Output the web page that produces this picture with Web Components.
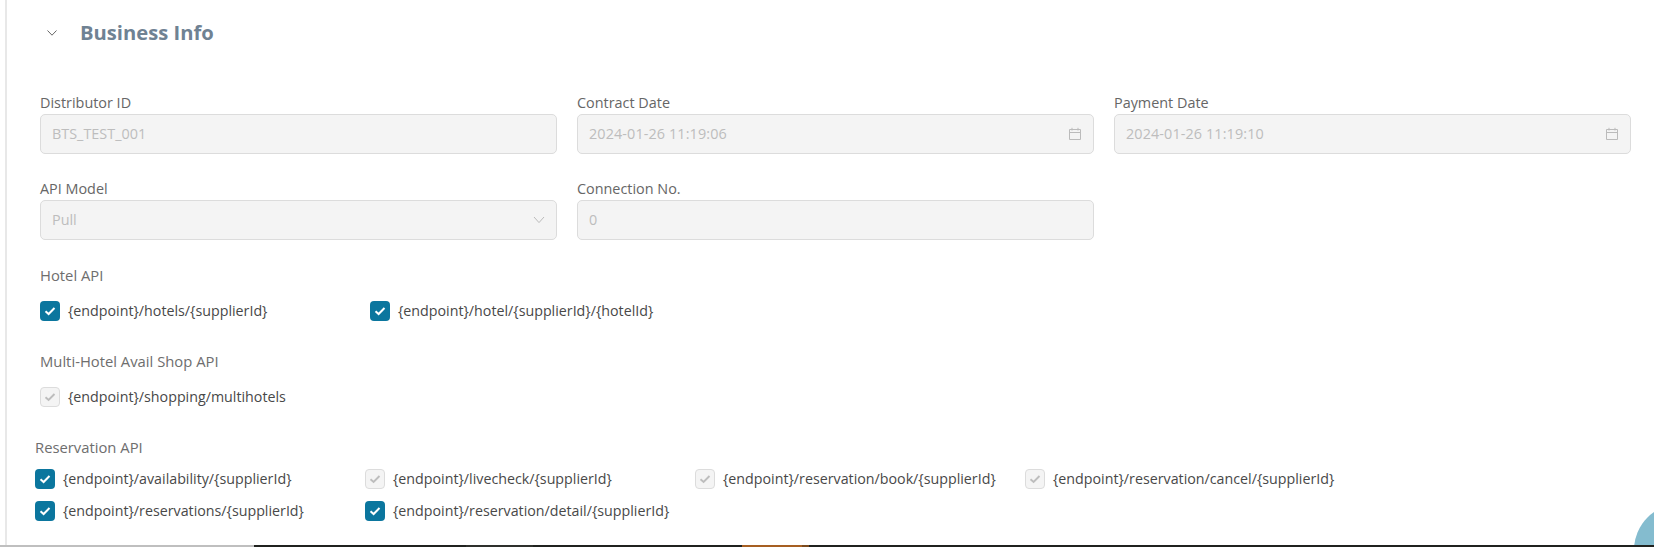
<!DOCTYPE html>
<html>
<head>
<meta charset="utf-8">
<title>Business Info</title>
<style>
	html, body {
		margin: 0;
		height: 547px;
		overflow: hidden;
		background: #FFFFFF;
		font-family: "Open Sans", "Liberation Sans", sans-serif;
	}
</style>
</head>
<body>
<biz-panel>
	<biz-section-title>Business Info</biz-section-title>
	<biz-form-grid>
		<biz-field label="Distributor ID" value="BTS_TEST_001"></biz-field>
		<biz-field label="Contract Date" value="2024-01-26 11:19:06" icon="calendar"></biz-field>
		<biz-field label="Payment Date" value="2024-01-26 11:19:10" icon="calendar"></biz-field>
		<biz-field label="API Model" value="Pull" icon="chevron"></biz-field>
		<biz-field label="Connection No." value="0"></biz-field>
	</biz-form-grid>
	<biz-api-group label="Hotel API" gap="first" >
		<biz-check checked>{endpoint}/hotels/{supplierId}</biz-check>
		<biz-check checked>{endpoint}/hotel/{supplierId}/{hotelId}</biz-check>
	</biz-api-group>
	<biz-api-group label="Multi-Hotel Avail Shop API">
		<biz-check disabled>{endpoint}/shopping/multihotels</biz-check>
	</biz-api-group>
	<biz-api-group label="Reservation API" type="outdent">
		<biz-check checked>{endpoint}/availability/{supplierId}</biz-check>
		<biz-check disabled>{endpoint}/livecheck/{supplierId}</biz-check>
		<biz-check disabled>{endpoint}/reservation/book/{supplierId}</biz-check>
		<biz-check disabled>{endpoint}/reservation/cancel/{supplierId}</biz-check>
		<biz-check checked>{endpoint}/reservations/{supplierId}</biz-check>
		<biz-check checked>{endpoint}/reservation/detail/{supplierId}</biz-check>
	</biz-api-group>
</biz-panel>
<biz-float-button></biz-float-button>
<biz-bottom-strip></biz-bottom-strip>

<script>
class Panel extends HTMLElement {
	constructor() {
		super();
		let shadowRoot = this.attachShadow({mode: 'open'});
		shadowRoot.innerHTML = `
		<style>
		:host {
			display: block;
			box-sizing: border-box;
			height: 545px;
			margin-left: 5px;
			border-left: 2px solid #E8E8E8;
			overflow: hidden;
		}
		</style>
		<slot></slot>`;
	}
}
window.customElements.define('biz-panel', Panel);

class SectionTitle extends HTMLElement {
	constructor() {
		super();
		let shadowRoot = this.attachShadow({mode: 'open'});
		shadowRoot.innerHTML = `
		<style>
		:host {
			display: flex;
			align-items: center;
			height: 64px;
			margin-bottom: 28px;
			padding-left: 40px;
			font-size: 20.2px;
			font-weight: 700;
			color: #6F8293;
		}
		svg {
			width: 10px;
			height: 6px;
			margin-top: 2px;
			margin-right: 23px;
			fill: none;
			stroke: #555555;
			stroke-width: 0.9;
		}
		</style>
		<svg viewBox="0 0 10 6"><path d="M0.5 0.5 L5 5.2 L9.5 0.5"/></svg>
		<slot></slot>`;
	}
}
window.customElements.define('biz-section-title', SectionTitle);

class FormGrid extends HTMLElement {
	constructor() {
		super();
		let shadowRoot = this.attachShadow({mode: 'open'});
		shadowRoot.innerHTML = `
		<style>
		:host {
			display: grid;
			grid-template-columns: repeat(3, 517px);
			column-gap: 20px;
			row-gap: 24px;
			padding-left: 33px;
		}
		</style>
		<slot></slot>`;
	}
}
window.customElements.define('biz-form-grid', FormGrid);

class Field extends HTMLElement {
	constructor() {
		super();
		let icons = {
			calendar: `<svg width="14" height="14" viewBox="0 0 14 14"><path d="M1.5 2.5 H12.5 V12.5 H1.5 Z M1.5 5.5 H12.5 M4 0.8 V3.5 M10 0.8 V3.5"/></svg>`,
			chevron: `<svg width="12" height="8" viewBox="0 0 12 8"><path d="M1 1 L6 6.6 L11 1"/></svg>`
		};
		let shadowRoot = this.attachShadow({mode: 'open'});
		shadowRoot.innerHTML = `
		<style>
		:host {
			display: block;
		}
		label {
			display: block;
			height: 22px;
			font-size: 14.4px;
			line-height: 21px;
			color: #666666;
		}
		.box {
			box-sizing: border-box;
			display: flex;
			align-items: center;
			justify-content: space-between;
			height: 40px;
			padding: 0 11px;
			background: #F4F4F4;
			border: 1px solid #DCDCDC;
			border-radius: 5px;
			font-size: 14.4px;
			color: #BDBDBD;
		}
		.box span {
			margin-top: -2px;
		}
		:host([icon="calendar"]) .box span {
			letter-spacing: 0.11px;
		}
		svg {
			fill: none;
			stroke: #BBBBBB;
			stroke-width: 1;
		}
		</style>
		<label>${this.getAttribute('label')}</label>
		<div class="box">
			<span>${this.getAttribute('value')}</span>
			${icons[this.getAttribute('icon')] || ''}
		</div>`;
	}
}
window.customElements.define('biz-field', Field);

class ApiGroup extends HTMLElement {
	constructor() {
		super();
		let shadowRoot = this.attachShadow({mode: 'open'});
		shadowRoot.innerHTML = `
		<style>
		:host {
			display: block;
			margin-top: 29px;
			padding-left: 33px;
		}
		:host([gap="first"]) {
			margin-top: 24px;
		}
		:host([type="outdent"]) {
			padding-left: 28px;
		}
		.title {
			height: 22px;
			font-size: 14.8px;
			line-height: 22px;
			color: #6E6E6E;
		}
		.list {
			display: grid;
			grid-template-columns: repeat(4, 330px);
			row-gap: 12px;
			margin-top: 15px;
		}
		:host([type="outdent"]) .list {
			margin-top: 11px;
		}
		</style>
		<div class="title">${this.getAttribute('label')}</div>
		<div class="list"><slot></slot></div>`;
	}
}
window.customElements.define('biz-api-group', ApiGroup);

class Check extends HTMLElement {
	constructor() {
		super();
		let shadowRoot = this.attachShadow({mode: 'open'});
		shadowRoot.innerHTML = `
		<style>
		:host {
			display: flex;
			align-items: center;
			height: 20px;
			font-size: 14.25px;
			color: #484848;
			white-space: nowrap;
		}
		.mark {
			box-sizing: border-box;
			display: flex;
			align-items: center;
			justify-content: center;
			flex: none;
			width: 20px;
			height: 20px;
			margin-right: 8px;
			border-radius: 4px;
			background: #0B769E;
		}
		:host([disabled]) .mark {
			background: #F4F4F4;
			border: 1px solid #DCDCDC;
		}
		svg {
			fill: none;
			stroke: #FFFFFF;
			stroke-width: 2;
		}
		:host([disabled]) svg {
			stroke: #BDBDBD;
			stroke-width: 1.9;
		}
		.text {
			margin-top: -2px;
		}
		</style>
		<span class="mark"><svg width="12" height="10" viewBox="0 0 12 10"><path d="M1.5 5.2 L4.6 8 L10.5 2"/></svg></span>
		<span class="text"><slot></slot></span>`;
	}
}
window.customElements.define('biz-check', Check);

class FloatButton extends HTMLElement {
	constructor() {
		super();
		let shadowRoot = this.attachShadow({mode: 'open'});
		shadowRoot.innerHTML = `
		<style>
		:host {
			position: absolute;
			left: 1634px;
			top: 504px;
			width: 20px;
			height: 41px;
			overflow: hidden;
		}
		div {
			width: 92px;
			height: 92px;
			border-radius: 50%;
			background: #84BCCF;
		}
		</style>
		<div></div>`;
	}
}
window.customElements.define('biz-float-button', FloatButton);

class BottomStrip extends HTMLElement {
	constructor() {
		super();
		let shadowRoot = this.attachShadow({mode: 'open'});
		shadowRoot.innerHTML = `
		<style>
		:host {
			position: absolute;
			left: 0;
			top: 545px;
			display: flex;
			width: 1654px;
			height: 2px;
			background: #20221F;
		}
		.grey { width: 254px; background: #BFBFBF; }
		.dark { width: 212px; }
		.mid { width: 67px; background: #2E302C; }
		.gap { width: 209px; }
		.orange { width: 60px; background: #A65F22; }
		.brown { width: 7px; background: #7A4A1E; }
		</style>
		<div class="grey"></div><div class="dark"></div><div class="mid"></div><div class="gap"></div><div class="orange"></div><div class="brown"></div>`;
	}
}
window.customElements.define('biz-bottom-strip', BottomStrip);
</script>
</body>
</html>
